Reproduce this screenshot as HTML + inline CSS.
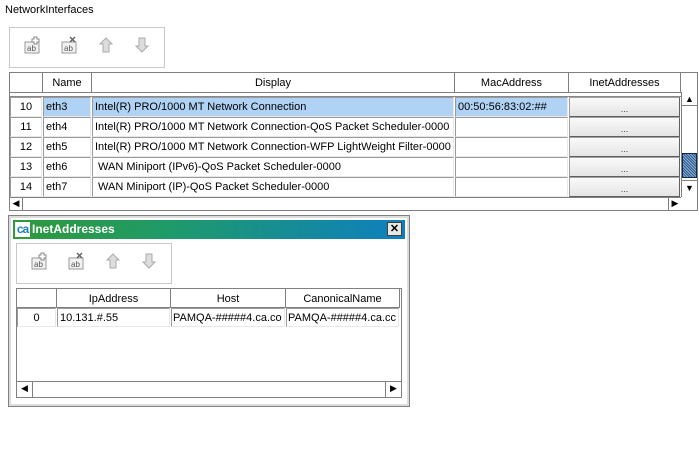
<!DOCTYPE html>
<html><head><style>
*{box-sizing:border-box;margin:0;padding:0}
body{width:699px;height:452px;background:#fff;font-family:"Liberation Sans",sans-serif;font-size:11px;color:#000;position:relative;overflow:hidden}
.a{position:absolute}
.tb{position:absolute;border:1px solid #c8c8c8;background:#fff}
.c{position:absolute;border:1px solid #9a9a9a;border-right-color:#e8e8e8;border-bottom-color:#e8e8e8;background:#fff;line-height:19px;padding-left:2px;white-space:nowrap;overflow:hidden}
.h{position:absolute;background:#fff;border-right:1px solid #808080;border-bottom:1px solid #808080;text-align:center;line-height:20px}
.btn{position:absolute;background:linear-gradient(#fafafa,#e4e4e4);border:1px solid #a0a0a0;border-right-color:#606060;border-bottom-color:#606060;text-align:center;line-height:22px;font-size:9px;color:#444}
</style></head><body>
<div class="a" style="left:5px;top:4px">NetworkInterfaces</div>

<div class="tb" style="left:9px;top:27px;width:156px;height:41px"></div>
<svg class="a" style="left:24px;top:36px" width="130" height="20">
<g><rect x="1" y="6" width="14" height="11" fill="#f2f2f2" stroke="#999"/><text x="3" y="15" font-size="8" font-family="Liberation Sans" fill="#555">ab</text><path d="M10 1h3v2h2v3h-2v2h-3v-2h-2v-3h2z" fill="#fff" stroke="#888"/></g>
<g transform="translate(37,0)"><rect x="1" y="6" width="14" height="11" fill="#f2f2f2" stroke="#999"/><text x="3" y="15" font-size="8" font-family="Liberation Sans" fill="#555">ab</text><path d="M9 1l5 5M14 1l-5 5" stroke="#666" stroke-width="1.5"/></g>
<path d="M82 2l6 6h-3v8h-6v-8h-3z" fill="#ddd" stroke="#aaa"/>
<path d="M118 16l6-6h-3v-8h-6v8h-3z" fill="#ddd" stroke="#aaa"/>
</svg>

<div class="a" style="left:9px;top:72px;width:689px;height:139px;border:1px solid #808080;background:#fff"></div>
<div class="h" style="left:10px;top:73px;width:33px;height:20px"></div>
<div class="h" style="left:43px;top:73px;width:49px;height:20px">Name</div>
<div class="h" style="left:92px;top:73px;width:363px;height:20px">Display</div>
<div class="h" style="left:455px;top:73px;width:114px;height:20px">MacAddress</div>
<div class="h" style="left:569px;top:73px;width:112px;height:20px">InetAddresses</div>
<div class="a" style="left:10px;top:93px;width:671px;height:4px;border-bottom:1px solid #888"></div>

<div class="a" style="left:10px;top:97px">
<div class="c" style="left:0;top:0;width:32px;height:20px;text-align:center;padding:0">10</div>
<div class="c" style="left:33px;top:0;width:48px;height:20px;background:#b0d3f5">eth3</div>
<div class="c" style="left:82px;top:0;width:362px;height:20px;background:#b0d3f5">Intel(R) PRO/1000 MT Network Connection</div>
<div class="c" style="left:445px;top:0;width:113px;height:20px;background:#b0d3f5">00:50:56:83:02:##</div>
<div class="btn" style="left:559px;top:0;width:111px;height:20px">...</div>

<div class="c" style="left:0;top:20px;width:32px;height:20px;text-align:center;padding:0">11</div>
<div class="c" style="left:33px;top:20px;width:48px;height:20px">eth4</div>
<div class="c" style="left:82px;top:20px;width:362px;height:20px">Intel(R) PRO/1000 MT Network Connection-QoS Packet Scheduler-0000</div>
<div class="c" style="left:445px;top:20px;width:113px;height:20px"></div>
<div class="btn" style="left:559px;top:20px;width:111px;height:20px">...</div>

<div class="c" style="left:0;top:40px;width:32px;height:20px;text-align:center;padding:0">12</div>
<div class="c" style="left:33px;top:40px;width:48px;height:20px">eth5</div>
<div class="c" style="left:82px;top:40px;width:362px;height:20px">Intel(R) PRO/1000 MT Network Connection-WFP LightWeight Filter-0000</div>
<div class="c" style="left:445px;top:40px;width:113px;height:20px"></div>
<div class="btn" style="left:559px;top:40px;width:111px;height:20px">...</div>

<div class="c" style="left:0;top:60px;width:32px;height:20px;text-align:center;padding:0">13</div>
<div class="c" style="left:33px;top:60px;width:48px;height:20px">eth6</div>
<div class="c" style="left:82px;top:60px;width:362px;height:20px">&nbsp;WAN Miniport (IPv6)-QoS Packet Scheduler-0000</div>
<div class="c" style="left:445px;top:60px;width:113px;height:20px"></div>
<div class="btn" style="left:559px;top:60px;width:111px;height:20px">...</div>

<div class="c" style="left:0;top:80px;width:32px;height:20px;text-align:center;padding:0">14</div>
<div class="c" style="left:33px;top:80px;width:48px;height:20px">eth7</div>
<div class="c" style="left:82px;top:80px;width:362px;height:20px">&nbsp;WAN Miniport (IP)-QoS Packet Scheduler-0000</div>
<div class="c" style="left:445px;top:80px;width:113px;height:20px"></div>
<div class="btn" style="left:559px;top:80px;width:111px;height:20px">...</div>
</div>
<div class="a" style="left:10px;top:197px;width:671px;height:13px;border-top:1px solid #808080;background:#fff"></div>
<div class="a" style="left:10px;top:197px;width:13px;height:13px;border-right:1px solid #808080;font-size:9px;line-height:12px;text-align:center">◀</div>
<div class="a" style="left:668px;top:197px;width:13px;height:13px;border-left:1px solid #808080;font-size:9px;line-height:12px;text-align:center">▶</div>
<div class="a" style="left:681px;top:92px;width:16px;height:105px;border-left:1px solid #808080;background:#fff"></div>
<div class="a" style="left:682px;top:92px;width:15px;height:14px;border-bottom:1px solid #808080;font-size:9px;line-height:14px;text-align:center">▲</div>
<div class="a" style="left:682px;top:153px;width:15px;height:25px;background:repeating-linear-gradient(45deg,#2c5a8a 0 1px,#8fb2d8 1px 2px);border:1px solid #0a2a50"></div>
<div class="a" style="left:682px;top:180px;width:15px;height:17px;border-top:1px solid #808080;font-size:9px;line-height:15px;text-align:center">▼</div>

<div class="a" style="left:9px;top:216px;width:400px;height:190px;background:#fff;border:2px solid #dcdcdc;outline:1px solid #808080"></div>
<div class="a" style="left:13px;top:220px;width:392px;height:19px;background:linear-gradient(90deg,#2f9a3a 0%,#1f9a6a 40%,#0d7fc0 100%)"></div>
<div class="a" style="left:15px;top:222px;width:15px;height:15px;background:#fff;color:#1a7fc0;font-weight:bold;font-size:12px;line-height:14px;text-align:center;letter-spacing:-1px">ca</div>
<div class="a" style="left:32px;top:221px;color:#fff;font-weight:bold;font-size:12px;line-height:17px">InetAddresses</div>
<div class="a" style="left:387px;top:222px;width:15px;height:14px;background:#e8e8e8;border:1px solid #404040;font-size:11px;line-height:12px;text-align:center;font-weight:bold">✕</div>

<div class="tb" style="left:16px;top:243px;width:156px;height:41px"></div>
<svg class="a" style="left:31px;top:252px" width="130" height="20">
<g><rect x="1" y="6" width="14" height="11" fill="#f2f2f2" stroke="#999"/><text x="3" y="15" font-size="8" font-family="Liberation Sans" fill="#555">ab</text><path d="M10 1h3v2h2v3h-2v2h-3v-2h-2v-3h2z" fill="#fff" stroke="#888"/></g>
<g transform="translate(37,0)"><rect x="1" y="6" width="14" height="11" fill="#f2f2f2" stroke="#999"/><text x="3" y="15" font-size="8" font-family="Liberation Sans" fill="#555">ab</text><path d="M9 1l5 5M14 1l-5 5" stroke="#666" stroke-width="1.5"/></g>
<path d="M82 2l6 6h-3v8h-6v-8h-3z" fill="#ddd" stroke="#aaa"/>
<path d="M118 16l6-6h-3v-8h-6v8h-3z" fill="#ddd" stroke="#aaa"/>
</svg>

<div class="a" style="left:16px;top:288px;width:386px;height:110px;border:1px solid #808080;background:#fff"></div>
<div class="h" style="left:17px;top:289px;width:40px;height:19px"></div>
<div class="h" style="left:57px;top:289px;width:114px;height:19px">IpAddress</div>
<div class="h" style="left:171px;top:289px;width:115px;height:19px">Host</div>
<div class="h" style="left:286px;top:289px;width:114px;height:19px">CanonicalName</div>
<div class="c" style="left:17px;top:308px;width:39px;height:19px;text-align:center;padding:0;line-height:18px">0</div>
<div class="c" style="left:57px;top:308px;width:113px;height:19px;line-height:18px">10.131.#.55</div>
<div class="c" style="left:171px;top:308px;width:114px;height:19px;line-height:18px;padding-left:1px">PAMQA-#####4.ca.co</div>
<div class="c" style="left:286px;top:308px;width:113px;height:19px;line-height:18px;padding-left:1px">PAMQA-#####4.ca.cc</div>
<div class="a" style="left:17px;top:381px;width:384px;height:16px;border-top:1px solid #808080"></div>
<div class="a" style="left:17px;top:381px;width:16px;height:16px;border-right:1px solid #808080;font-size:9px;line-height:15px;text-align:center">◀</div>
<div class="a" style="left:385px;top:381px;width:16px;height:16px;border-left:1px solid #808080;font-size:9px;line-height:15px;text-align:center">▶</div>
</body></html>
